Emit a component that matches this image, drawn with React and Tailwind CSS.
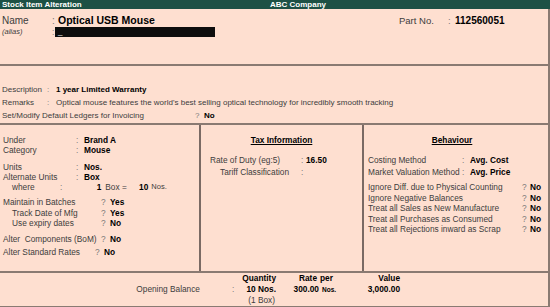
import React from "react";

// label / colon / value colours used all over the Tally-like form
const LBL = "text-[#3d3d3d]";
const COL = "text-[#7a7a7a]";
const VAL = "font-bold text-black";

function Colon({ w }) {
  return <span className={`${w} shrink-0 ${COL}`}>:</span>;
}

function Ask({ w }) {
  return <span className={`${w} shrink-0 ${COL}`}>?</span>;
}

// left column: "Label : Value"
function KeyRow({ label, value }) {
  return (
    <div className="flex h-[10px] leading-[10px]">
      <span className={`w-[76px] shrink-0 pl-[3px] ${LBL}`}>{label}</span>
      <Colon w="w-[8px]" />
      <span className={VAL}>{value}</span>
    </div>
  );
}

// left column: "Label ? Yes"
function YesRow({ label, value, indent, labelW = "w-[101px]" }) {
  return (
    <div className="flex h-[10.5px] leading-[10.5px]">
      <span className={`${labelW} shrink-0 whitespace-pre ${indent ? "pl-[12px]" : "pl-[3px]"} ${LBL}`}>
        {label}
      </span>
      <Ask w="w-[9px]" />
      <span className={VAL}>{value}</span>
    </div>
  );
}

const BEHAVIOUR = [
  "Ignore Diff. due to Physical Counting",
  "Ignore Negative Balances",
  "Treat all Sales as New Manufacture",
  "Treat all Purchases as Consumed",
  "Treat all Rejections inward as Scrap",
];

export default function App() {
  return (
    <div className="w-[550px] h-[307px] overflow-hidden bg-[#fedfd0] flex flex-col font-['Liberation_Sans',Arial,sans-serif] text-[8.3px]">
      {/* title bar */}
      <div className="h-[9px] shrink-0 flex items-center bg-[#1d5145] text-white font-bold text-[8px] leading-none">
        <span className="w-[270px] pl-[2px]">Stock Item Alteration</span>
        <span>ABC Company</span>
      </div>

      <div className="flex-1 flex flex-col border-r-2 border-[#8a7a72]">
        {/* name block */}
        <div className="h-[57px] shrink-0 border-b-2 border-[#8a7a72] pt-[5px]">
          <div className="flex items-baseline h-[13px] leading-[13px]">
            <span className={`w-[52px] pl-[2px] text-[10px] ${LBL}`}>Name</span>
            <span className={`w-[6px] text-[10px] ${COL}`}>:</span>
            <span className={`w-[341px] text-[10.5px] ${VAL}`}>Optical USB Mouse</span>
            <span className={`w-[49px] text-[9.5px] ${LBL}`}>Part No.</span>
            <span className={`w-[7px] text-[9.5px] ${COL}`}>:</span>
            <span className={`text-[10px] ${VAL}`}>112560051</span>
          </div>
          <div className="flex items-center h-[10px] leading-[10px]">
            <span className={`w-[52px] pl-[2px] italic text-[7.5px] ${LBL}`}>(alias)</span>
            <span className={`w-[3px] ${COL}`}>:</span>
            <div className="w-[160px] h-[10px] bg-[#0d0d0d] pl-[3px] text-white text-[8px] leading-[9px]">_</div>
          </div>
        </div>

        {/* description block */}
        <div className="h-[59px] shrink-0 border-b-2 border-[#8a7a72] pt-[17px] text-[8px]">
          <div className="flex h-[13px] leading-[13px]">
            <span className={`w-[47px] pl-[2px] ${LBL}`}>Description</span>
            <Colon w="w-[9px]" />
            <span className={VAL}>1 year Limited Warranty</span>
          </div>
          <div className="flex h-[13px] leading-[13px]">
            <span className={`w-[47px] pl-[2px] ${LBL}`}>Remarks</span>
            <Colon w="w-[9px]" />
            <span className={LBL}>
              Optical mouse features the world's best selling optical technology for incredibly smooth tracking
            </span>
          </div>
          <div className="flex h-[13px] leading-[13px]">
            <span className={`w-[195px] pl-[2px] ${LBL}`}>Set/Modify Default Ledgers for Invoicing</span>
            <Ask w="w-[9px]" />
            <span className={VAL}>No</span>
          </div>
        </div>

        {/* three columns */}
        <div className="h-[148px] shrink-0 flex border-b-2 border-[#8a7a72]">
          {/* general */}
          <div className="w-[201px] shrink-0 border-r-2 border-[#7a6a64] pt-[10px]">
            <KeyRow label="Under" value="Brand A" />
            <KeyRow label="Category" value="Mouse" />
            <div className="mt-[7px]">
              <KeyRow label="Units" value="Nos." />
              <KeyRow label="Alternate Units" value="Box" />
              <div className="flex h-[10px] leading-[10px] whitespace-nowrap">
                <span className={`w-[60px] shrink-0 pl-[12px] ${LBL}`}>where</span>
                <span className={COL}>:</span>
                <span className={`w-[39px] shrink-0 text-right ${VAL}`}>1</span>
                <span className={`w-[28px] shrink-0 pl-[4px] ${LBL}`}>Box =</span>
                <span className={`w-[19px] shrink-0 text-right ${VAL}`}>10</span>
                <span className={`pl-[3px] text-[7.5px] ${LBL}`}>Nos.</span>
              </div>
            </div>
            <div className="mt-[5px]">
              <YesRow label="Maintain in Batches" value="Yes" />
              <YesRow label="Track Date of Mfg" value="Yes" indent />
              <YesRow label="Use expiry dates" value="No" indent />
            </div>
            <div className="mt-[5px]">
              <YesRow label="Alter  Components (BoM)" value="No" />
            </div>
            <div className="mt-[3px]">
              <YesRow label="Alter Standard Rates" value="No" labelW="w-[95px]" />
            </div>
          </div>

          {/* tax */}
          <div className="w-[163px] shrink-0 border-r-2 border-[#7a6a64] pt-[10px]">
            <div className={`text-center underline h-[10px] leading-[10px] ${VAL}`}>Tax Information</div>
            <div className="mt-[10px] flex h-[11px] leading-[11px]">
              <span className={`w-[100px] pl-[9px] ${LBL}`}>Rate of Duty (eg:5)</span>
              <Colon w="w-[5px]" />
              <span className={VAL}>16.50</span>
            </div>
            <div className="flex h-[13px] leading-[13px]">
              <span className={`w-[100px] pl-[19px] ${LBL}`}>Tariff Classification</span>
              <Colon w="w-[5px]" />
            </div>
          </div>

          {/* behaviour */}
          <div className="flex-1 pt-[10px]">
            <div className={`text-center underline h-[10px] leading-[10px] pr-[8px] ${VAL}`}>Behaviour</div>
            <div className="mt-[10px] flex h-[11px] leading-[11px]">
              <span className={`w-[98px] pl-[4px] ${LBL}`}>Costing Method</span>
              <Colon w="w-[8px]" />
              <span className={VAL}>Avg. Cost</span>
            </div>
            <div className="flex h-[12px] leading-[12px]">
              <span className={`w-[98px] pl-[4px] ${LBL}`}>Market Valuation Method</span>
              <Colon w="w-[8px]" />
              <span className={VAL}>Avg. Price</span>
            </div>
            <div className="mt-[4px]">
              {BEHAVIOUR.map((t) => (
                <div key={t} className="flex h-[10.5px] leading-[10.5px]">
                  <span className={`w-[158px] pl-[4px] ${LBL}`}>{t}</span>
                  <Ask w="w-[8px]" />
                  <span className={VAL}>No</span>
                </div>
              ))}
            </div>
          </div>
        </div>

        {/* opening balance */}
        <div className="flex-1 border-b-2 border-[#8a7a72]">
          <div className="flex h-[11px] leading-[11px]">
            <span className="w-[239px]" />
            <span className={`w-[37px] text-right ${VAL}`}>Quantity</span>
            <span className={`w-[41px] text-right ${VAL}`}>Rate</span>
            <span className={`w-[20px] pl-[3px] ${VAL}`}>per</span>
            <span className={`w-[63px] text-right ${VAL}`}>Value</span>
          </div>
          <div className="flex h-[11px] leading-[11px]">
            <span className={`w-[200px] text-right ${LBL}`}>Opening Balance</span>
            <span className={`w-[39px] pl-[32px] ${COL}`}>:</span>
            <span className={`w-[37px] text-right ${VAL}`}>10 Nos.</span>
            <span className={`w-[43px] text-right ${VAL}`}>300.00</span>
            <span className={`w-[18px] pl-[3px] text-[6.5px] ${VAL}`}>Nos.</span>
            <span className={`w-[63px] text-right ${VAL}`}>3,000.00</span>
          </div>
          <div className="flex h-[11px] leading-[11px]">
            <span className="w-[239px]" />
            <span className={`w-[36px] text-right ${LBL}`}>(1 Box)</span>
          </div>
        </div>
      </div>
    </div>
  );
}
